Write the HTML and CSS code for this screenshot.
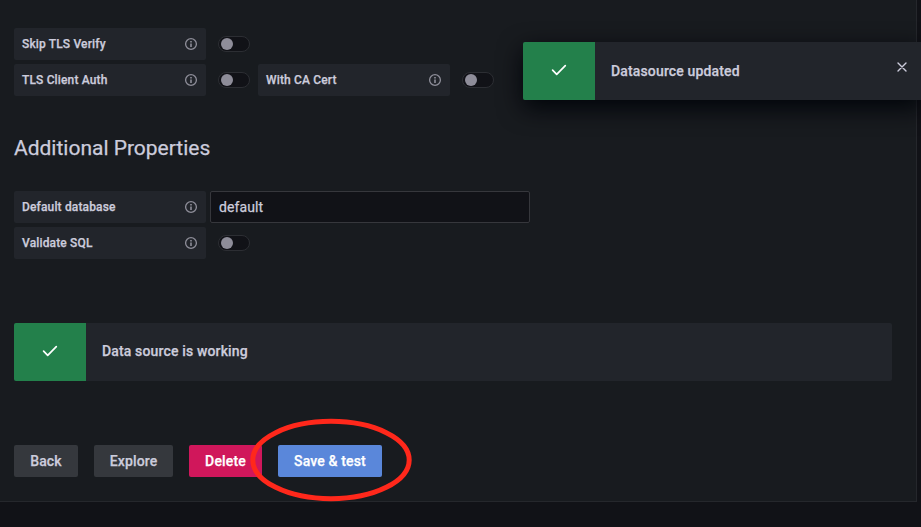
FILE: index.html
```html
<!DOCTYPE html>
<html lang="en">
<head>
<meta charset="utf-8">
<title>Data source settings</title>
<link rel="stylesheet" href="styles.css">
</head>
<body>
<svg class="defs" aria-hidden="true">
  <symbol id="info" viewBox="0 0 14 14"><circle cx="7" cy="7" r="5.4" fill="none" stroke="currentColor" stroke-width="1.3"/><path d="M6.2 6.5h1.6v3.5h-1.6zM6.2 4h1.6v1.6h-1.6z"/></symbol>
  <symbol id="check" viewBox="0 0 24 24"><path d="M5.6 12.2l4.1 4.1 8.6-8.6" fill="none" stroke="currentColor" stroke-width="1.7" stroke-linecap="round" stroke-linejoin="round"/></symbol>
  <symbol id="close" viewBox="0 0 16 16"><path d="M4 4l8 8M12 4l-8 8" fill="none" stroke="currentColor" stroke-width="1.4" stroke-linecap="round"/></symbol>
</svg>
<main class="panel">
  <section class="fields">
    <div class="row">
      <div class="label"><span>Skip TLS Verify</span><svg class="info"><use href="#info"/></svg></div>
      <div class="switch-cell"><span class="switch" role="switch" aria-checked="false"></span></div>
    </div>
    <div class="row">
      <div class="label"><span>TLS Client Auth</span><svg class="info"><use href="#info"/></svg></div>
      <div class="switch-cell"><span class="switch" role="switch" aria-checked="false"></span></div>
      <div class="label"><span>With CA Cert</span><svg class="info"><use href="#info"/></svg></div>
      <div class="switch-cell"><span class="switch" role="switch" aria-checked="false"></span></div>
    </div>
  </section>
  <h3 class="heading">Additional Properties</h3>
  <section class="fields">
    <div class="row">
      <div class="label"><span>Default database</span><svg class="info"><use href="#info"/></svg></div>
      <input class="input" type="text" value="default">
    </div>
    <div class="row">
      <div class="label"><span>Validate SQL</span><svg class="info"><use href="#info"/></svg></div>
      <div class="switch-cell"><span class="switch" role="switch" aria-checked="false"></span></div>
    </div>
  </section>
  <div class="alert">
    <div class="alert-icon"><svg class="check"><use href="#check"/></svg></div>
    <div class="alert-text">Data source is working</div>
  </div>
  <div class="actions">
    <button class="button back">Back</button>
    <button class="button explore">Explore</button>
    <button class="button delete">Delete</button>
    <div class="save-wrap">
      <button class="button save">Save &amp; test</button>
      <svg class="ring" viewBox="0 0 164 84"><ellipse cx="82" cy="42" rx="78.2" ry="38.7"/></svg>
    </div>
  </div>
</main>
<div class="alert toast">
  <div class="alert-icon"><svg class="check"><use href="#check"/></svg></div>
  <div class="alert-text">Datasource updated</div>
  <svg class="close"><use href="#close"/></svg>
</div>
</body>
</html>
```
FILE: styles.css
```css
* { box-sizing: border-box; }
body {
  margin: 0;
  height: 527px;
  overflow: hidden;
  position: relative;
  background: #111217;
  color: #ccccdc;
  font: 14px/22px Roboto, "Liberation Sans", sans-serif;
  letter-spacing: 0.15px;
  -webkit-text-stroke: 0.25px currentColor;
}
svg { display: block; fill: currentColor; }
.defs { position: absolute; width: 0; height: 0; }
.panel {
  width: 917px;
  height: 502px;
  padding: 28px 24px 0 14px;
  background: #181b1f;
  border: solid #25272c;
  border-width: 0 1px 1px 0;
}
.fields { display: flex; flex-direction: column; gap: 4px; }
.row { display: flex; gap: 4px; height: 32px; }
.label {
  width: 192px;
  padding: 0 8px;
  display: flex;
  align-items: center;
  justify-content: space-between;
  background: #22252b;
  border-radius: 2px;
  font-size: 12px;
  font-weight: 500;
}
.info { width: 14px; height: 14px; color: #8e8e99; }
.switch-cell { width: 44px; padding-left: 8px; display: flex; align-items: center; }
.switch {
  width: 32px;
  height: 16px;
  padding: 1px 2px;
  border: 1px solid #2c2e33;
  border-radius: 8px;
  background: #111217;
}
.switch::before {
  content: "";
  display: block;
  width: 12px;
  height: 12px;
  border-radius: 50%;
  background: #8e8d99;
}
.heading {
  margin: 39px 0 29px;
  font-size: 21px;
  line-height: 27px;
  font-weight: 400;
  letter-spacing: -0.01px;
}
.input {
  width: 320px;
  height: 32px;
  padding: 0 8px;
  border: 1px solid #36373c;
  border-radius: 2px;
  background: #111217;
  color: inherit;
  font: inherit;
  letter-spacing: 0.1px;
}
.alert {
  display: flex;
  height: 58px;
  margin-top: 64px;
  background: #22252b;
  border-radius: 2px;
}
.alert-icon {
  width: 72px;
  display: flex;
  align-items: center;
  justify-content: center;
  padding-bottom: 2px;
  background: #23804b;
  border-radius: 2px 0 0 2px;
  color: #fff;
}
.check { width: 24px; height: 24px; }
.alert-text { padding: 17px 16px; font-weight: 500; }
.actions { display: flex; gap: 16px; margin-top: 64px; }
.button {
  height: 32px;
  padding: 0;
  border: 0;
  border-radius: 2px;
  background: #35383d;
  color: #ccccdc;
  font: 500 14px/32px Roboto, "Liberation Sans", sans-serif;
  letter-spacing: 0.15px;
}
.back { width: 64px; }
.explore { width: 79px; }
.delete { width: 73px; background: #d0175b; color: #fff; }
.save { width: 104px; background: #5a87da; color: #fff; display: block; }
.save-wrap { position: relative; }
.ring {
  position: absolute;
  left: -29px;
  top: -27px;
  width: 164px;
  height: 84px;
  fill: none;
  stroke: #ff281b;
  stroke-width: 5;
  pointer-events: none;
}
.toast {
  position: absolute;
  left: 523px;
  top: 42px;
  width: 400px;
  margin: 0;
  box-shadow: 0 8px 24px #010409;
}
.toast .alert-text { flex: 1; padding-top: 18px; }
.close { width: 16px; height: 16px; margin: 17px 13px 0 0; }
```
